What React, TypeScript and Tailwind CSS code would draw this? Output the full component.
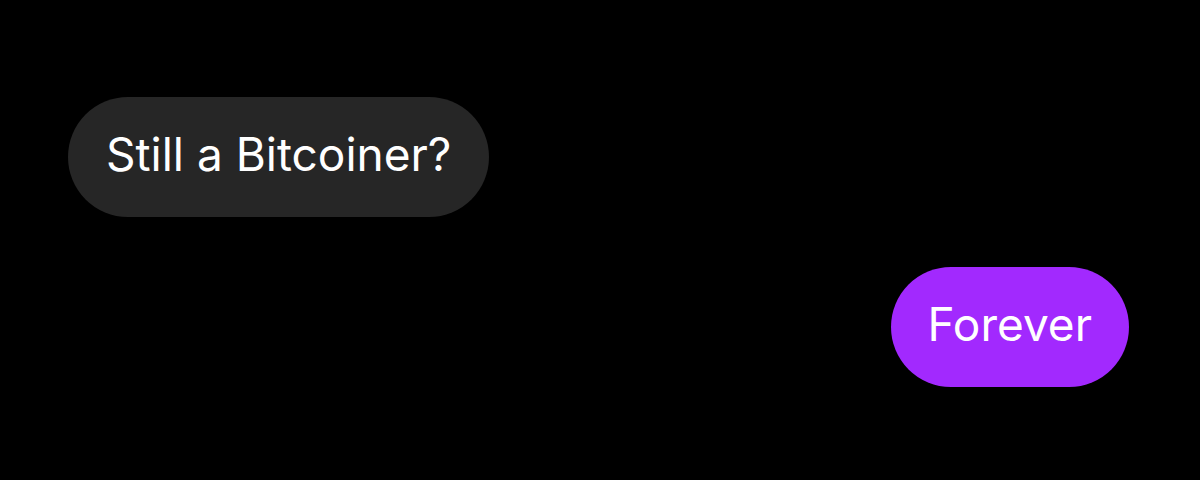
export default function App() {
  return (
    <div className="w-[1200px] h-[480px] bg-black flex flex-col pt-[97px] pl-[68px] pr-[71px] gap-[50px]" style={{ fontFamily: 'Inter, "Noto Sans", sans-serif' }}>
      <div className="self-start h-[120px] rounded-full bg-[#262626] flex items-center px-[38px] pb-[5px] text-white text-[46px]">
        Still a Bitcoiner?
      </div>
      <div className="self-end h-[120px] rounded-full bg-[#a229fe] flex items-center px-[37px] pb-[5px] text-white text-[46px]">
        Forever
      </div>
    </div>
  );
}
